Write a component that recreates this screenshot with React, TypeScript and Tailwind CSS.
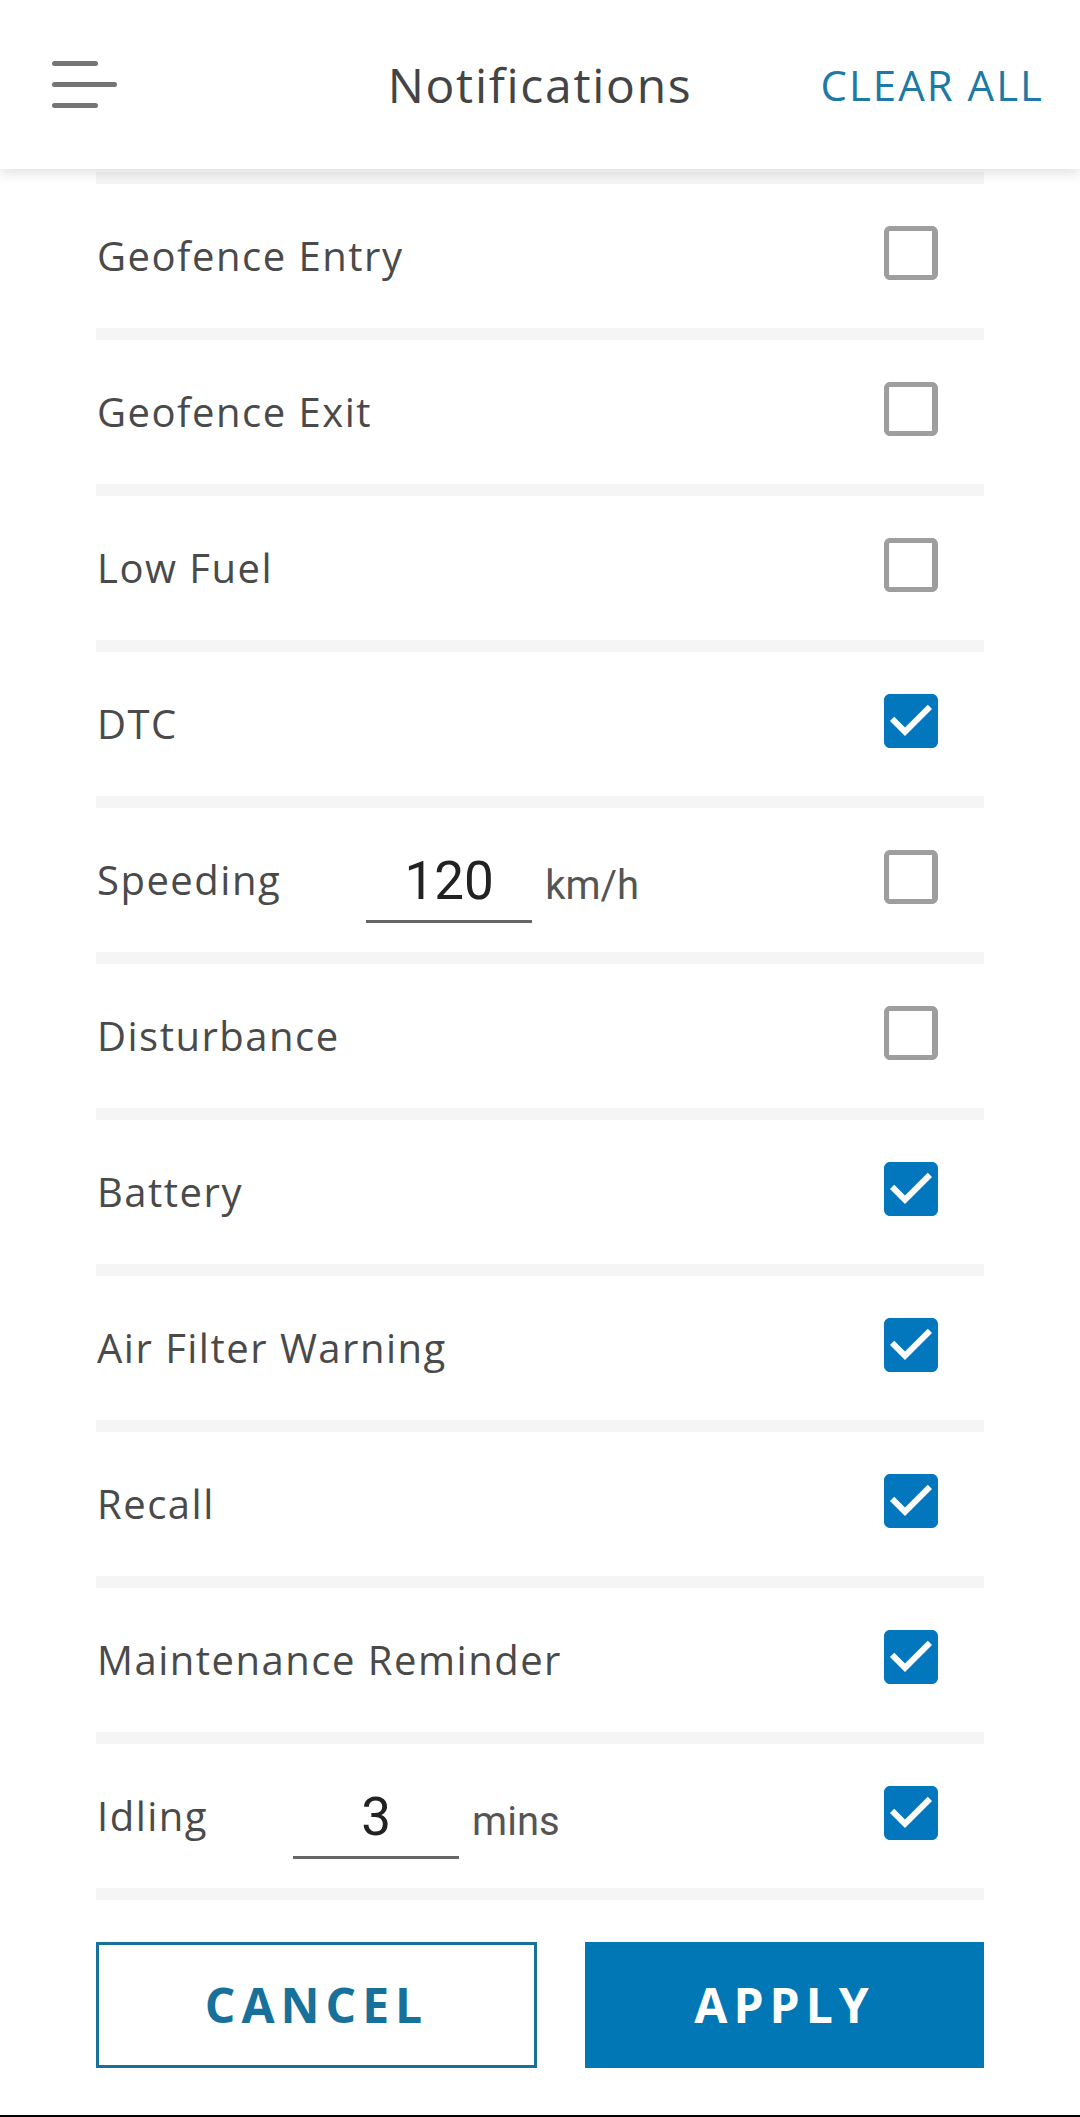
import React, { useState } from "react";

type Item = {
  label: string;
  checked: boolean;
  value?: string;
  unit?: string;
};

const initialItems: Item[] = [
  { label: "Geofence Entry", checked: false },
  { label: "Geofence Exit", checked: false },
  { label: "Low Fuel", checked: false },
  { label: "DTC", checked: true },
  { label: "Speeding", checked: false, value: "120", unit: "km/h" },
  { label: "Disturbance", checked: false },
  { label: "Battery", checked: true },
  { label: "Air Filter Warning", checked: true },
  { label: "Recall", checked: true },
  { label: "Maintenance Reminder", checked: true },
  { label: "Idling", checked: true, value: "3", unit: "mins" },
];

// material style checkbox, box drawn to the full 54px
const CheckBox: React.FC<{ checked: boolean; onClick: () => void }> = ({
  checked,
  onClick,
}) => (
  <button onClick={onClick} className="w-[54px] h-[54px] shrink-0">
    {checked ? (
      <svg viewBox="3 3 18 18" className="w-[54px] h-[54px]">
        <path
          fill="#0277bd"
          d="M19 3H5c-1.11 0-2 .9-2 2v14c0 1.1.89 2 2 2h14c1.11 0 2-.9 2-2V5c0-1.1-.89-2-2-2zm-9 14l-5-5 1.41-1.41L10 14.17l7.59-7.59L19 8l-9 9z"
        />
      </svg>
    ) : (
      <svg viewBox="3 3 18 18" className="w-[54px] h-[54px]">
        <path
          fill="#9e9e9e"
          d="M19 4.7v14.6H4.7V4.7h14.3m0-1.7H5c-1.1 0-2 .9-2 2v14c0 1.1.9 2 2 2h14c1.1 0 2-.9 2-2V5c0-1.1-.9-2-2-2z"
        />
      </svg>
    )}
  </button>
);

const Separator = () => <div className="h-[12px] bg-[#f5f5f5]" />;

export default function App() {
  const [items, setItems] = useState<Item[]>(initialItems);

  const toggle = (i: number) =>
    setItems((prev) =>
      prev.map((it, idx) => (idx === i ? { ...it, checked: !it.checked } : it))
    );

  const clearAll = () =>
    setItems((prev) => prev.map((it) => ({ ...it, checked: false })));

  return (
    <div className="w-full min-h-[2117px] bg-white flex flex-col font-['Open_Sans',sans-serif]">
      {/* header */}
      <header className="relative z-10 h-[169px] bg-white shadow-[0_4px_12px_rgba(0,0,0,0.13)] grid grid-cols-[1fr_auto_1fr] items-center">
        <div className="pl-[52px] flex flex-col gap-[16px]">
          <span className="block w-[46px] h-[5px] rounded-full bg-[#757575]" />
          <span className="block w-[65px] h-[5px] rounded-full bg-[#757575]" />
          <span className="block w-[46px] h-[5px] rounded-full bg-[#757575]" />
        </div>
        <h1 className="text-[48px] leading-none text-[#444] tracking-[1.7px]">
          Notifications
        </h1>
        <div className="flex justify-end pr-[36px]">
          <button
            onClick={clearAll}
            className="text-[42px] leading-none text-[#1e79a4] tracking-[2px]"
          >
            CLEAR ALL
          </button>
        </div>
      </header>

      {/* list */}
      <div className="mx-[96px] pt-[3px]">
        <Separator />
        {items.map((it, i) => (
          <div key={it.label}>
            <div className="h-[144px] flex items-center pr-[46px]">
              <span className="text-[40px] leading-[40px] tracking-[1.5px] text-[#4a4a4a] pl-[1px]">
                {it.label}
              </span>
              {it.value !== undefined && (
                <div className="ml-[85px] mt-[18px] flex items-baseline gap-[13px] font-['Roboto',sans-serif]">
                  <div className="w-[166px] border-b-[3px] border-[#666] pb-[12px] text-center text-[53px] leading-[53px] text-[#222]">
                    {it.value}
                  </div>
                  <span className="text-[40px] text-[#555]">{it.unit}</span>
                </div>
              )}
              <div className="ml-auto">
                <CheckBox checked={it.checked} onClick={() => toggle(i)} />
              </div>
            </div>
            <Separator />
          </div>
        ))}
      </div>

      {/* footer buttons */}
      <div className="mx-[96px] mt-[42px] flex gap-[48px]">
        <button className="w-[441px] h-[126px] border-[3px] border-[#18719a] text-[#18719a] text-[48px] font-bold tracking-[6px]">
          CANCEL
        </button>
        <button className="flex-1 h-[126px] bg-[#0277b6] text-white text-[48px] font-bold tracking-[6px]">
          APPLY
        </button>
      </div>
      <div className="mt-auto h-[2px] bg-black" />
    </div>
  );
}
